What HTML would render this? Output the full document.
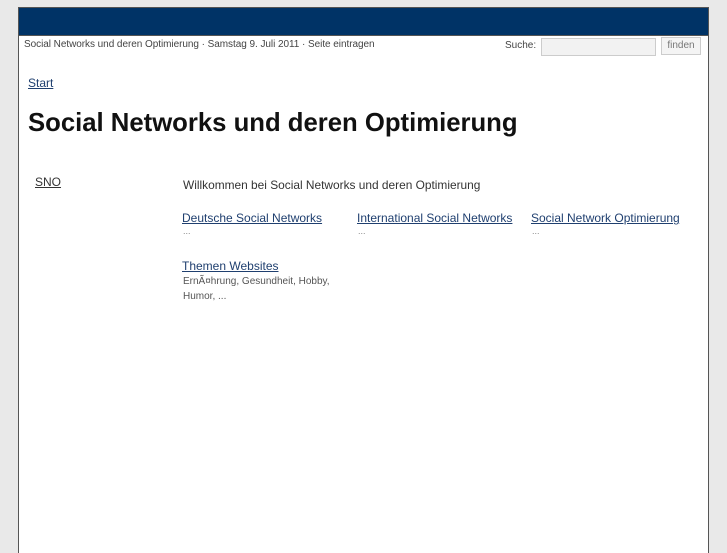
<!DOCTYPE html>
<html><head><meta charset="utf-8"><style>
html,body{margin:0;padding:0;width:727px;height:545px;overflow:hidden;background:#e9e9e9;font-family:"Liberation Sans",sans-serif;}
#box{position:absolute;left:18px;top:7px;width:689px;height:545px;background:#fff;border:1px solid #555;border-bottom:none;}
#hd{height:27px;background:#003366;border-bottom:1px solid #555;}
.t{position:absolute;white-space:nowrap;}
a{color:#1f3f6f;text-decoration:underline;}
</style></head><body>
<div id="box"><div id="hd"></div></div>
<div class="t" style="left:24px;top:39px;font-size:10px;color:#444;letter-spacing:-0.05px">Social Networks und deren Optimierung · Samstag 9. Juli 2011 · Seite eintragen</div>
<div class="t" style="left:505px;top:40px;font-size:10px;color:#444">Suche:</div>
<div class="t" style="left:541px;top:38px;width:113px;height:16px;border:1px solid #ccc;background:#f2f2f2"></div>
<div class="t" style="left:661px;top:37px;width:38px;height:16px;border:1px solid #ccc;background:#f4f4f4;font-size:10px;color:#777;text-align:center;line-height:16px">finden</div>
<a class="t" style="left:28px;top:76px;font-size:12px;color:#1f3f6f">Start</a>
<div class="t" style="left:28px;top:109px;font-size:25.7px;font-weight:bold;color:#111">Social Networks und deren Optimierung</div>
<a class="t" style="left:35px;top:175px;font-size:12px;color:#333">SNO</a>
<div class="t" style="left:183px;top:178px;font-size:11.9px;color:#333">Willkommen bei Social Networks und deren Optimierung</div>
<a class="t" style="left:182px;top:211px;font-size:12px">Deutsche Social Networks</a>
<div class="t" style="left:183px;top:226px;font-size:9px;color:#888">...</div>
<a class="t" style="left:357px;top:211px;font-size:12px">International Social Networks</a>
<div class="t" style="left:358px;top:226px;font-size:9px;color:#888">...</div>
<a class="t" style="left:531px;top:211px;font-size:12px">Social Network Optimierung</a>
<div class="t" style="left:532px;top:226px;font-size:9px;color:#888">...</div>
<a class="t" style="left:182px;top:259px;font-size:12px">Themen Websites</a>
<div class="t" style="left:183px;top:274px;font-size:10px;color:#555;line-height:15px">ErnÃ¤hrung, Gesundheit, Hobby,<br>Humor, ...</div>
</body></html>
